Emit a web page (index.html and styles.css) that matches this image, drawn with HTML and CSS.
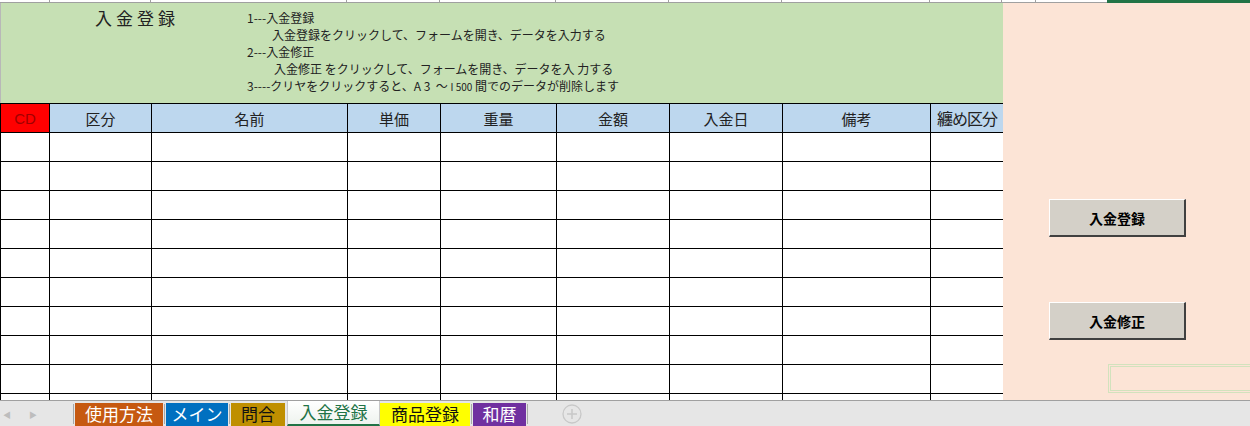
FILE: index.html
```html
<!DOCTYPE html>
<html lang="ja">
<head>
    <meta charset="UTF-8">
    <title>入金登録</title>
    <link rel="stylesheet" href="styles.css">
</head>
<body>
    <div class="top-strip">
        <span class="tick" style="width:50px"></span>
        <span class="tick" style="width:101px"></span>
        <span class="tick" style="width:196px"></span>
        <span class="tick" style="width:93px"></span>
        <span class="tick" style="width:116px"></span>
        <span class="tick" style="width:113px"></span>
        <span class="tick" style="width:113px"></span>
        <span class="tick" style="width:148px"></span>
        <span class="tick" style="width:72px"></span>
        <span class="tick" style="width:34px"></span>
        <span class="tick blank" style="width:71px"></span>
        <span class="active-bar"></span>
    </div>

    <div class="sheet">
        <div class="left">
            <div class="info">
                <div class="title">入金登録</div>
                <div class="notes">
                    <p>1---入金登録</p>
                    <p class="indent">入金登録をクリックして、フォームを開き、データを入力する</p>
                    <p>2---入金修正</p>
                    <p class="indent2">入金修正 をクリックして、フォームを開き、データを入 力する</p>
                    <p>3----クリヤをクリックすると、A 3 &nbsp;～ <span class="small">I 500</span> 間でのデータが削除します</p>
                </div>
            </div>

            <table class="grid">
                <colgroup>
                    <col style="width:49px">
                    <col style="width:102px">
                    <col style="width:196px">
                    <col style="width:93px">
                    <col style="width:116px">
                    <col style="width:113px">
                    <col style="width:113px">
                    <col style="width:148px">
                    <col style="width:73px">
                </colgroup>
                <thead>
                    <tr>
                        <th class="cd">CD</th>
                        <th>区分</th>
                        <th>名前</th>
                        <th>単価</th>
                        <th>重量</th>
                        <th>金額</th>
                        <th>入金日</th>
                        <th>備考</th>
                        <th class="tight">纏め区分</th>
                    </tr>
                </thead>
                <tbody id="rows"></tbody>
            </table>
        </div>

        <div class="right">
            <button class="xl-btn">入金登録</button>
            <button class="xl-btn second">入金修正</button>
            <div class="textbox"></div>
        </div>
    </div>

    <div class="tabbar">
        <div class="arrows">
            <span class="arrow">&#9664;</span>
            <span class="arrow">&#9654;</span>
        </div>
        <span class="sep"></span>
        <span class="tab orange">使用方法</span>
        <span class="sep"></span>
        <span class="tab blue">メイン</span>
        <span class="sep"></span>
        <span class="tab gold">問合</span>
        <span class="tab current">入金登録</span>
        <span class="tab yellow">商品登録</span>
        <span class="sep"></span>
        <span class="tab purple">和暦</span>
        <span class="sep"></span>
        <span class="add">
            <svg width="20" height="20" viewBox="0 0 20 20">
                <circle cx="10" cy="10" r="9" fill="none" stroke="#c8c8c8" stroke-width="1.3"/>
                <path d="M10 5v10M5 10h10" stroke="#c8c8c8" stroke-width="1.5"/>
            </svg>
        </span>
    </div>

    <script>
        // empty data rows
        const body = document.getElementById('rows');
        for (let i = 0; i < 10; i++) {
            const tr = document.createElement('tr');
            for (let j = 0; j < 9; j++) {
                tr.appendChild(document.createElement('td'));
            }
            body.appendChild(tr);
        }
    </script>
</body>
</html>
```

FILE: styles.css
```css
* {
    box-sizing: border-box;
    margin: 0;
    padding: 0;
}

body {
    width: 1250px;
    height: 426px;
    overflow: hidden;
    background: #fff;
    font-family: "Noto Sans CJK JP", "Liberation Sans", sans-serif;
    color: #000;
}

.top-strip {
    display: flex;
    height: 3px;
    background: #fff;
    border-bottom: 1px solid #a0a0a0;
}

.tick {
    height: 2px;
    border-right: 1px solid #a0a0a0;
}

.tick.blank {
    border-right: none;
}

.active-bar {
    flex: 1;
    height: 3px;
    background: #217346;
}

.sheet {
    display: flex;
    height: 397px;
    overflow: hidden;
}

.left {
    width: 1003px;
    border-left: 1px solid #b8b8b8;
}

.info {
    display: flex;
    height: 100px;
    background: #c6e0b4;
}

.title {
    width: 246px;
    padding: 2px 0 0 94px;
    font-size: 17px;
    letter-spacing: 4px;
    color: #222;
}

.notes {
    padding-top: 6px;
    font-size: 12px;
    line-height: 17px;
    color: #222;
}

.notes .indent {
    padding-left: 25px;
}

.notes .indent2 {
    padding-left: 27px;
}

.notes .small {
    font-size: 10px;
}

.grid {
    border-collapse: collapse;
    table-layout: fixed;
    width: 1003px;
    margin-left: -1px;
}

.grid th,
.grid td {
    border: 1px solid #000;
    height: 29px;
}

.grid th {
    background: #bdd7ee;
    font-weight: normal;
    font-size: 15px;
    color: #222;
}

.grid th.cd {
    background: #ff0000;
    color: #a00000;
    font-family: "Liberation Sans", sans-serif;
    font-size: 15px;
}

.grid th.tight {
    font-size: 16px;
    letter-spacing: -1px;
}

.right {
    flex: 1;
    background: #fce4d6;
    display: flex;
    flex-direction: column;
    align-items: flex-start;
    padding: 196px 0 0 46px;
}

.xl-btn {
    width: 137px;
    height: 38px;
    background: #d4d0c8;
    border: none;
    border-top: 1px solid #fff;
    border-left: 1px solid #fff;
    border-right: 2px solid #404040;
    border-bottom: 2px solid #404040;
    font-family: "Noto Sans CJK JP", sans-serif;
    font-weight: bold;
    font-size: 14px;
    color: #000;
}

.xl-btn.second {
    margin-top: 65px;
}

.textbox {
    margin: 24px 0 0 59px;
    width: 160px;
    height: 29px;
    border: 3px double #d2e2bd;
}

.tabbar {
    display: flex;
    align-items: flex-end;
    height: 26px;
    background: #e6e6e6;
    border-top: 1px solid #a0a0a0;
}

.arrows {
    display: flex;
    gap: 18px;
    width: 72px;
    height: 24px;
    align-items: center;
    padding-left: 3px;
}

.arrow {
    font-size: 8px;
    color: #bdbdbd;
}

.sep {
    width: 1px;
    height: 20px;
    margin: 0 1px 2px;
    background: #a8a8a8;
}

.tab {
    height: 23px;
    font-size: 17px;
    line-height: 22px;
    text-align: center;
}

.tab.orange {
    width: 88px;
    background: #c65911;
    color: #fff;
}

.tab.blue {
    width: 62px;
    background: #0070c0;
    color: #fff;
}

.tab.gold {
    width: 54px;
    background: #bf8f00;
    color: #111;
}

.tab.current {
    width: 93px;
    height: 25px;
    margin-left: 2px;
    background: linear-gradient(#fff, #eef3ee);
    color: #217346;
    border-bottom: 2px solid #217346;
    border-left: 1px solid #c8c8c8;
    border-right: 1px solid #c8c8c8;
    line-height: 22px;
}

.tab.yellow {
    width: 90px;
    background: #ffff00;
    color: #111;
}

.tab.purple {
    width: 53px;
    background: #7030a0;
    color: #fff;
}

.add {
    height: 24px;
    display: flex;
    align-items: center;
    margin-left: 33px;
}
```
